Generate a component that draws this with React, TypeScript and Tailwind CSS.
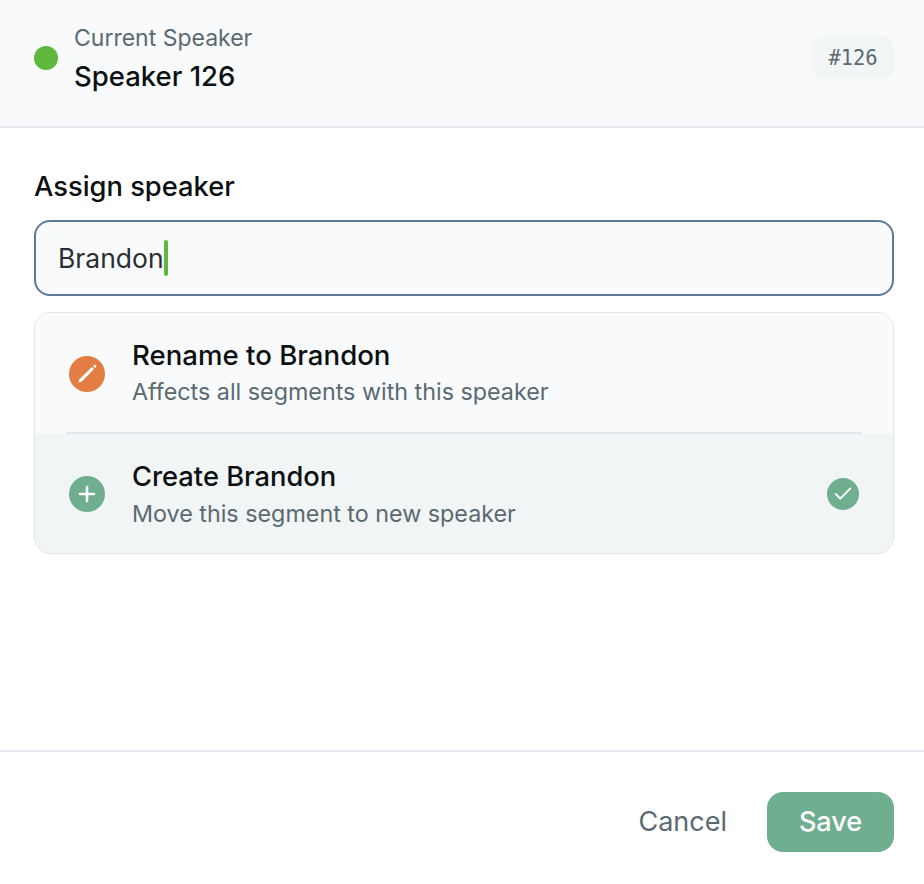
import { Check, Plus } from "lucide-react";

const sans = "font-['Inter','Liberation_Sans',sans-serif]";

function Pencil() {
  return (
    <svg width="36" height="36" viewBox="0 0 36 36" fill="none">
      <path d="M9.5 26.5 L10.4 23.2 L22.9 11 L25 13.1 L12.8 25.6 Z" fill="white" />
      <path d="M24 9.9 L24.9 9 Q25.7 8.3 26.5 8.9 L27.1 9.5 Q27.7 10.3 27.1 11 L26.1 12 Z" fill="white" />
    </svg>
  );
}

export default function App() {
  return (
    <div className={`flex h-[884px] w-[924px] flex-col bg-white ${sans}`}>
      <header className="flex h-[128px] items-center justify-between border-b-2 border-[#e6e8ee] bg-[#f9fafc] pr-[30px] pb-[10px] pl-[34px]">
        <div className="flex items-center gap-[16px]">
          <span className="h-[24px] w-[24px] rounded-full bg-[#5fb83c]" />
          <div className="-mt-[2px] flex flex-col">
            <span className="text-[23px] leading-[32px] text-[#5a6a70]">Current Speaker</span>
            <span className="mt-[6px] mb-[1px] text-[27.5px] leading-[32px] font-medium text-[#0c1011]">Speaker 126</span>
          </div>
        </div>
        <span className="flex h-[42px] w-[82px] items-center justify-center rounded-[12px] bg-[#f2f5f6] font-['DejaVu_Sans_Mono',monospace] text-[20.4px] text-[#5a6a70]">
          #126
        </span>
      </header>

      <main className="flex flex-1 flex-col pt-[42px] pr-[30px] pl-[34px]">
        <label className="text-[27.3px] leading-[34px] font-medium text-[#0c1011]">Assign speaker</label>
        <div className="mt-[16px] flex h-[76px] items-center rounded-[16px] border-2 border-[#5b7a99] bg-[#f9fafc] pl-[22px]">
          <span className="pt-[1px] text-[26.5px] text-[#2a2e30]">Brandon</span>
          <span className="h-[36px] w-[4px] rounded-full bg-[#5fb83c]" />
        </div>

        <div className="mt-[16px] overflow-hidden rounded-[16px] border border-[#e4e7ea] bg-[#f9fafc]">
          <div className="flex h-[121px] items-center pr-[34px] pl-[34px]">
            <span className="flex h-[36px] w-[36px] items-center justify-center rounded-full bg-[#e47d43]">
              <Pencil />
            </span>
            <div className="ml-[27px] flex flex-col pb-[2px]">
              <span className="text-[27.6px] leading-[34px] font-medium text-[#0c1011]">Rename to Brandon</span>
              <span className="mt-[4px] text-[23.3px] leading-[32px] text-[#5a6a70]">Affects all segments with this speaker</span>
            </div>
          </div>
          <div className="relative flex h-[119px] items-center bg-[#f2f5f6] pr-[34px] pl-[34px]">
            <div className="absolute top-[-2px] right-[31px] left-[31px] h-[2px] bg-[#e4e7eb]" />
            <span className="flex h-[36px] w-[36px] items-center justify-center rounded-full bg-[#6fae8f]">
              <Plus size={24} color="white" strokeWidth={2.6} />
            </span>
            <div className="ml-[27px] flex flex-1 flex-col pt-[2px]">
              <span className="text-[27.3px] leading-[34px] font-medium text-[#0c1011]">Create Brandon</span>
              <span className="mt-[4px] text-[23.3px] leading-[32px] text-[#5a6a70]">Move this segment to new speaker</span>
            </div>
            <span className="flex h-[32px] w-[32px] items-center justify-center rounded-full bg-[#6fae8f]">
              <Check size={22} color="white" strokeWidth={2} />
            </span>
          </div>
        </div>
      </main>

      <footer className="flex h-[134px] items-start justify-end gap-[40px] border-t-2 border-[#e6e8ee] px-[30px] pt-[40px]">
        <button className="h-[60px] text-[27px] text-[#5a6a70]">Cancel</button>
        <button className="h-[60px] w-[127px] rounded-[16px] bg-[#6fae8f] text-[27px] font-medium text-white">Save</button>
      </footer>
    </div>
  );
}
